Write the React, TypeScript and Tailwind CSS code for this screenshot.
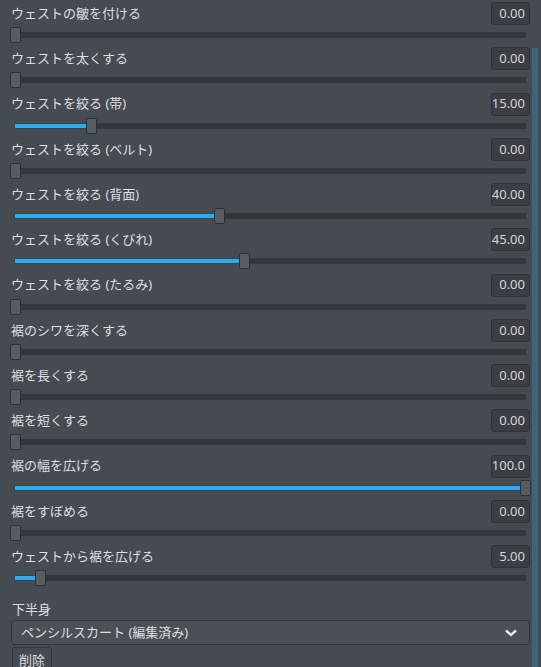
const rows = [
  { label: 'ウェストの皺を付ける', value: '0.00', pct: 0 },
  { label: 'ウェストを太くする', value: '0.00', pct: 0 },
  { label: 'ウェストを絞る (帯)', value: '15.00', pct: 15 },
  { label: 'ウェストを絞る (ベルト)', value: '0.00', pct: 0 },
  { label: 'ウェストを絞る (背面)', value: '40.00', pct: 40 },
  { label: 'ウェストを絞る (くびれ)', value: '45.00', pct: 45 },
  { label: 'ウェストを絞る (たるみ)', value: '0.00', pct: 0 },
  { label: '裾のシワを深くする', value: '0.00', pct: 0 },
  { label: '裾を長くする', value: '0.00', pct: 0 },
  { label: '裾を短くする', value: '0.00', pct: 0 },
  { label: '裾の幅を広げる', value: '100.0', pct: 100 },
  { label: '裾をすぼめる', value: '0.00', pct: 0 },
  { label: 'ウェストから裾を広げる', value: '5.00', pct: 5 },
]

const TRACK_W = 512

// handle sits over the track, so it's positioned
function Slider({ pct }: { pct: number }) {
  const fill = (pct / 100) * TRACK_W
  const handleLeft = Math.max(-4, Math.min(TRACK_W - 6, fill - 5))
  return (
    <div className="relative flex items-center h-[16px] w-[512px] ml-[14px]">
      <div className="h-[6px] w-full bg-[#33373b] rounded-[1px] flex">
        {pct > 0 && (
          <div className="h-[6px] bg-[#3aa8e0] border border-[#1d4f69] rounded-[1px]" style={{ width: fill }} />
        )}
      </div>
      <div
        className="absolute top-0 h-[16px] w-[11px] rounded-[2px] bg-[#585d63] border border-[#2c3034]"
        style={{ left: handleLeft }}
      />
    </div>
  )
}

function Row({ label, value, pct }: { label: string; value: string; pct: number }) {
  return (
    <div className="h-[45.25px] pt-[2px] flex flex-col gap-[2px]">
      <div className="flex items-center justify-between h-[23px] px-[11px]">
        <span className="text-[13px] text-[#dedfe0]">{label}</span>
        <div className="h-[23px] w-[39px] rounded-[3px] bg-[#3b3f44] border border-[#2e3236] flex items-center justify-end pr-[4px] text-[13px] text-[#d4d6d8]">
          {value}
        </div>
      </div>
      <Slider pct={pct} />
    </div>
  )
}

export default function App() {
  return (
    <div
      className="relative w-[541px] h-[667px] overflow-hidden bg-[#464b51]"
      style={{ fontFamily: '"Noto Sans", "Noto Sans CJK JP", sans-serif' }}
    >
      <div className="absolute right-[3px] top-[48px] bottom-0 w-[6px] bg-[#3d6479]" />
      <div className="flex flex-col">
        {rows.map((r) => (
          <Row key={r.label} {...r} />
        ))}
      </div>
      <div className="flex flex-col pt-[13px] px-[11px] gap-[2px]">
        <div className="pl-[1px] text-[13px] text-[#dedfe0] leading-[17px]">下半身</div>
        <div className="w-[519px] h-[25px] rounded-[4px] bg-[#4b5056] border border-[#33373c] flex items-center justify-between pl-[9px] pr-[11px]">
          <span className="text-[13px] text-[#dedfe0]">ペンシルスカート (編集済み)</span>
          <svg width="14" height="10" viewBox="0 0 14 10">
            <path d="M2 2.5 L7 7 L12 2.5" fill="none" stroke="#e6e7e8" strokeWidth="2.4" />
          </svg>
        </div>
        <div className="ml-[1px] w-[40px] h-[26px] rounded-[3px] bg-[#464b51] border border-[#33373c] flex items-center justify-center text-[13px] text-[#dedfe0]">
          削除
        </div>
      </div>
    </div>
  )
}
